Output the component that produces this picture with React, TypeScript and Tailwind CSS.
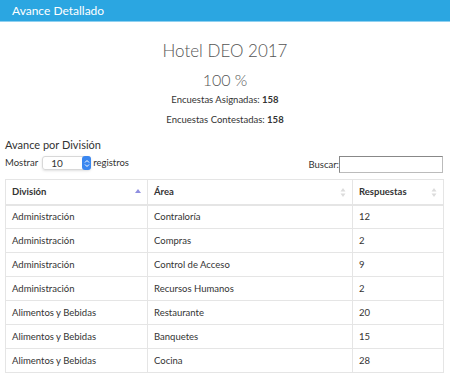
import React from 'react';

type Row = { division: string; area: string; respuestas: number };

const rows: Row[] = [
  { division: 'Administración', area: 'Contraloría', respuestas: 12 },
  { division: 'Administración', area: 'Compras', respuestas: 2 },
  { division: 'Administración', area: 'Control de Acceso', respuestas: 9 },
  { division: 'Administración', area: 'Recursos Humanos', respuestas: 2 },
  { division: 'Alimentos y Bebidas', area: 'Restaurante', respuestas: 20 },
  { division: 'Alimentos y Bebidas', area: 'Banquetes', respuestas: 15 },
  { division: 'Alimentos y Bebidas', area: 'Cocina', respuestas: 28 },
];

const SortIcon: React.FC<{ active?: boolean }> = ({ active }) => (
  <svg width="6" height="9" viewBox="0 0 6 9" className="ml-auto">
    {active ? (
      <path d="M3 1 L6 5 L0 5 Z" fill="#8f8fe0" />
    ) : (
      <>
        <path d="M3 0 L5.5 3.5 L0.5 3.5 Z" fill="#dcdcdc" />
        <path d="M3 9 L5.5 5.5 L0.5 5.5 Z" fill="#dcdcdc" />
      </>
    )}
  </svg>
);

const App: React.FC = () => {
  return (
    <div className="w-[450px] h-[373px] overflow-hidden bg-white text-[#333] font-['Lato','Liberation_Sans',sans-serif]">
      <div className="h-[22px] bg-[#2ba6e1] border-b border-[#8fd0f0] flex items-center px-3">
        <span className="text-white text-[12px]">Avance Detallado</span>
      </div>

      <div className="flex flex-col items-center">
        <h1 className="mt-[18px] text-[17px] font-light text-[#555] leading-[22px]">Hotel DEO 2017</h1>
        <div className="mt-[8px] text-[16px] font-light text-[#555] leading-[20px]">100 %</div>
        <p className="mt-[3px] text-[9.5px] leading-[14px]">
          Encuestas Asignadas: <b>158</b>
        </p>
        <p className="mt-[6px] text-[9.5px] leading-[14px]">
          Encuestas Contestadas: <b>158</b>
        </p>
      </div>

      <div className="px-[5px] pr-[7px]">
        <div className="mt-[11px] text-[11px] leading-[14px]">Avance por División</div>
        <div className="mt-[4px] flex items-end justify-between text-[9.5px]">
          <div className="flex items-center gap-[2px] mb-[3px]">
            <span>Mostrar</span>
            <div className="ml-[2px] h-[14px] w-[49px] flex items-center justify-between rounded-[3px] border border-[#d8d8d8] shadow-sm pl-[8px]">
              <span className="text-[10px]">10</span>
              <span className="h-[14px] w-[9px] rounded-[3px] bg-[#3a87f0] flex items-center justify-center -mr-px">
                <svg width="6" height="9" viewBox="0 0 6 9">
                  <path d="M1 3.5 L3 1.5 L5 3.5 M1 5.5 L3 7.5 L5 5.5" stroke="white" strokeWidth="1" fill="none" />
                </svg>
              </span>
            </div>
            <span>registros</span>
          </div>
          <div className="flex items-center">
            <span>Buscar:</span>
            <div className="h-[17px] w-[104px] border border-[#bbb] border-t-[#888] border-l-[#888]" />
          </div>
        </div>

        <table className="mt-[6px] w-[438px] border-collapse text-[9.5px] table-fixed">
          <colgroup>
            <col className="w-[142px]" />
            <col className="w-[205px]" />
            <col className="w-[91px]" />
          </colgroup>
          <thead>
            <tr className="h-[25px]">
              <th className="border border-[#e5e5e5] border-b-2 px-[6px] text-left font-bold">
                <div className="flex items-center">División<SortIcon active /></div>
              </th>
              <th className="border border-[#e5e5e5] border-b-2 px-[6px] text-left font-bold">
                <div className="flex items-center">Área<SortIcon /></div>
              </th>
              <th className="border border-[#e5e5e5] border-b-2 px-[6px] text-left font-bold">
                <div className="flex items-center">Respuestas<SortIcon /></div>
              </th>
            </tr>
          </thead>
          <tbody>
            {rows.map((r, i) => (
              <tr key={i} className="h-[24px]">
                <td className="border border-[#e5e5e5] px-[6px]">{r.division}</td>
                <td className="border border-[#e5e5e5] px-[6px]">{r.area}</td>
                <td className="border border-[#e5e5e5] px-[6px]">{r.respuestas}</td>
              </tr>
            ))}
          </tbody>
        </table>
      </div>
    </div>
  );
};

export default App;
